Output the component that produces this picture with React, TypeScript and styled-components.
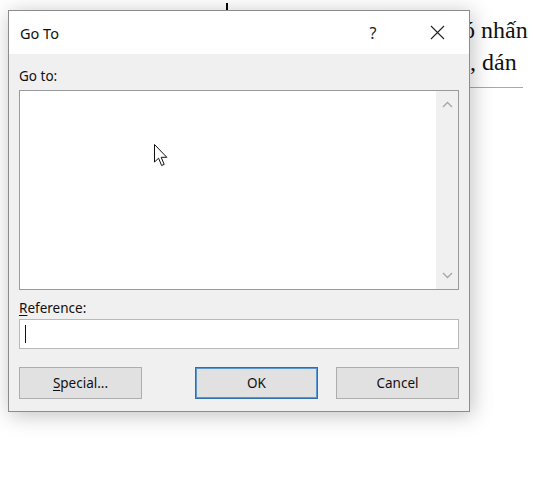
import React from "react";
import styled, { createGlobalStyle } from "styled-components";

const GlobalStyle = createGlobalStyle`
  html, body {
    margin: 0;
    padding: 0;
    background: #ffffff;
    overflow: hidden;
  }
  body {
    font-family: "Noto Sans", "Open Sans", "DejaVu Sans", sans-serif;
  }
`;

const Page = styled.div`
  position: relative;
  width: 533px;
  height: 484px;
  overflow: hidden;
  background: #ffffff;
`;

const Document = styled.div`
  display: flex;
  flex-direction: column;
  padding-top: 14px;
  font-family: "Liberation Serif", "DejaVu Serif", serif;
  font-size: 24px;
  color: #111;
`;

const DocLine = styled.div<{ $indent: number }>`
  height: 32px;
  line-height: 32px;
  padding-left: ${(p) => p.$indent}px;
  white-space: nowrap;
`;

const DocRule = styled.div`
  margin: 9px 10px 0 460px;
  height: 1px;
  background: #a8a8a8;
`;

const DocCaret = styled.div`
  position: absolute;
  left: 226px;
  top: 3px;
  width: 2px;
  height: 8px;
  background: #000;
`;

const Dialog = styled.div`
  position: absolute;
  left: 8px;
  top: 10px;
  width: 462px;
  box-sizing: border-box;
  border: 1px solid #8c8c8c;
  background: #f0f0f0;
  box-shadow: 2px 3px 20px rgba(0, 0, 0, 0.25);
  display: flex;
  flex-direction: column;
`;

const TitleBar = styled.div`
  height: 43px;
  background: #ffffff;
  display: flex;
  align-items: center;
  padding-left: 11px;
`;

const Title = styled.div`
  flex: 1;
  font-size: 14.5px;
  color: #111;
`;

const CaptionButton = styled.div`
  width: 64px;
  height: 43px;
  display: flex;
  align-items: center;
  justify-content: center;
  font-size: 16px;
  color: #222;
`;

const Body = styled.div`
  display: flex;
  flex-direction: column;
  padding: 12px 10px 12px;
`;

const Label = styled.div<{ $gap?: number }>`
  height: 20px;
  line-height: 20px;
  font-size: 13.5px;
  color: #111;
  margin-top: ${(p) => p.$gap ?? 0}px;
  margin-bottom: 4px;

  u {
    text-decoration-thickness: 1px;
    text-underline-offset: 2px;
  }
`;

const ListBox = styled.div`
  height: 200px;
  box-sizing: border-box;
  border: 1px solid #9a9a9a;
  background: #ffffff;
  display: flex;
  justify-content: flex-end;
  position: relative;
`;

const ScrollTrack = styled.div`
  width: 22px;
  background: #f0f0f0;
  display: flex;
  flex-direction: column;
  justify-content: space-between;
  align-items: center;
  padding: 10px 0;
`;

const Pointer = styled.svg`
  position: absolute;
  left: 134px;
  top: 53px;
`;

const TextField = styled.div`
  height: 30px;
  box-sizing: border-box;
  border: 1px solid #b9b9b9;
  background: #ffffff;
  display: flex;
  align-items: center;
  padding-left: 5px;
  margin-top: -3px;
`;

const Caret = styled.div`
  width: 1px;
  height: 18px;
  background: #111;
`;

const ButtonRow = styled.div`
  display: flex;
  justify-content: space-between;
  margin-top: 18px;
`;

const ButtonGroup = styled.div`
  display: flex;
  gap: 18px;
`;

const Button = styled.div<{ $primary?: boolean }>`
  width: 123px;
  height: 32px;
  box-sizing: border-box;
  border: 1px solid ${(p) => (p.$primary ? "#2f6fab" : "#adadad")};
  box-shadow: ${(p) => (p.$primary ? "inset 0 0 0 1px #5b98d3" : "none")};
  background: #e1e1e1;
  display: flex;
  align-items: center;
  justify-content: center;
  font-size: 13.5px;
  color: #111;

  u {
    text-decoration-thickness: 1px;
    text-underline-offset: 2px;
  }
`;

const Chevron: React.FC<{ up?: boolean }> = ({ up }) => (
  <svg width="11" height="7" viewBox="0 0 11 7">
    <path
      d={up ? "M1 6 L5.5 1.5 L10 6" : "M1 1 L5.5 5.5 L10 1"}
      fill="none"
      stroke="#a6a6a6"
      strokeWidth="1.3"
    />
  </svg>
);

const CloseIcon = () => (
  <svg width="15" height="15" viewBox="0 0 15 15">
    <path d="M1 1 L14 14 M14 1 L1 14" stroke="#222" strokeWidth="1.1" />
  </svg>
);

export default function App() {
  return (
    <Page>
      <GlobalStyle />
      <Document>
        <DocLine $indent={463}>ó nhấn</DocLine>
        <DocLine $indent={470}>, dán</DocLine>
        <DocRule />
      </Document>
      <DocCaret />
      <Dialog>
        <TitleBar>
          <Title>Go To</Title>
          <CaptionButton>?</CaptionButton>
          <CaptionButton>
            <CloseIcon />
          </CaptionButton>
        </TitleBar>
        <Body>
          <Label>Go to:</Label>
          <ListBox>
            <ScrollTrack>
              <Chevron up />
              <Chevron />
            </ScrollTrack>
            <Pointer width="14" height="23" viewBox="0 0 14 23">
              <path
                d="M0.5 0.5 L0.5 18 L4.6 14.2 L7.6 21.5 L10.2 20.4 L7.2 13.3 L12.8 13.3 Z"
                fill="#fff"
                stroke="#111"
                strokeWidth="1"
                strokeLinejoin="round"
              />
            </Pointer>
          </ListBox>
          <Label $gap={8}>
            <u>R</u>eference:
          </Label>
          <TextField>
            <Caret />
          </TextField>
          <ButtonRow>
            <Button>
              <u>S</u>pecial...
            </Button>
            <ButtonGroup>
              <Button $primary>OK</Button>
              <Button>Cancel</Button>
            </ButtonGroup>
          </ButtonRow>
        </Body>
      </Dialog>
    </Page>
  );
}
